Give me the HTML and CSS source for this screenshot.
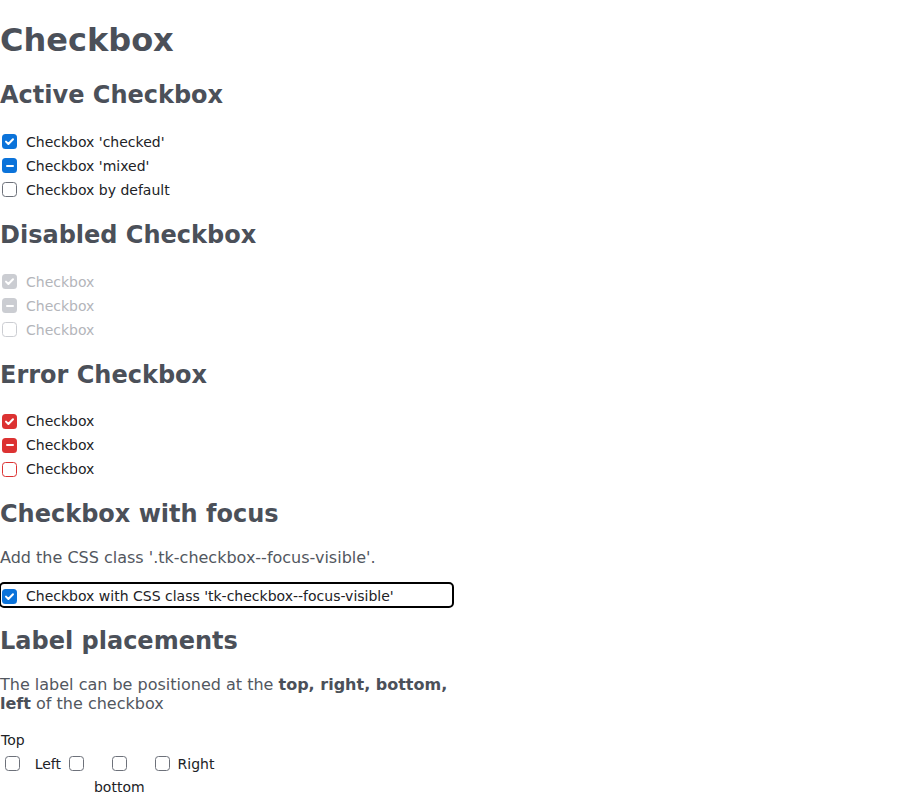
FILE: index.html
```html
<!DOCTYPE html>
<html lang="en">
<head>
<meta charset="utf-8">
<title>Checkbox</title>
<link rel="stylesheet" href="styles.css">
</head>
<body>
<main class="page">
  <h1 class="title">Checkbox</h1>

  <h2 class="section">Active Checkbox</h2>
  <div class="list">
    <label class="tk-checkbox">
      <span class="box box--checked"><svg viewBox="0 0 15 15"><path d="M4 7.6 L6.4 10 L11 5.2"/></svg></span>
      <span class="text">Checkbox 'checked'</span>
    </label>
    <label class="tk-checkbox">
      <span class="box box--mixed"><span class="bar"></span></span>
      <span class="text">Checkbox 'mixed'</span>
    </label>
    <label class="tk-checkbox">
      <span class="box"></span>
      <span class="text">Checkbox by default</span>
    </label>
  </div>

  <h2 class="section">Disabled Checkbox</h2>
  <div class="list list--disabled">
    <label class="tk-checkbox">
      <span class="box box--checked"><svg viewBox="0 0 15 15"><path d="M4 7.6 L6.4 10 L11 5.2"/></svg></span>
      <span class="text">Checkbox</span>
    </label>
    <label class="tk-checkbox">
      <span class="box box--mixed"><span class="bar"></span></span>
      <span class="text">Checkbox</span>
    </label>
    <label class="tk-checkbox">
      <span class="box"></span>
      <span class="text">Checkbox</span>
    </label>
  </div>

  <h2 class="section">Error Checkbox</h2>
  <div class="list list--error">
    <label class="tk-checkbox">
      <span class="box box--checked"><svg viewBox="0 0 15 15"><path d="M4 7.6 L6.4 10 L11 5.2"/></svg></span>
      <span class="text">Checkbox</span>
    </label>
    <label class="tk-checkbox">
      <span class="box box--mixed"><span class="bar"></span></span>
      <span class="text">Checkbox</span>
    </label>
    <label class="tk-checkbox">
      <span class="box"></span>
      <span class="text">Checkbox</span>
    </label>
  </div>

  <h2 class="section">Checkbox with focus</h2>
  <p class="desc">Add the CSS class '.tk-checkbox--focus-visible'.</p>
  <label class="tk-checkbox tk-checkbox--focus-visible">
    <span class="box box--checked"><svg viewBox="0 0 15 15"><path d="M4 7.6 L6.4 10 L11 5.2"/></svg></span>
    <span class="text">Checkbox with CSS class 'tk-checkbox--focus-visible'</span>
  </label>

  <h2 class="section">Label placements</h2>
  <p class="desc">The label can be positioned at the <strong>top, right, bottom, left</strong> of the checkbox</p>
  <div class="placements">
    <label class="place place--top">
      <span class="place-text place-text--top">Top</span>
      <span class="place-box"><span class="box"></span></span>
    </label>
    <label class="place place--left">
      <span class="place-text">Left</span>
      <span class="box"></span>
    </label>
    <label class="place place--bottom">
      <span class="place-box"><span class="box"></span></span>
      <span class="place-text">bottom</span>
    </label>
    <label class="place place--right">
      <span class="box"></span>
      <span class="place-text">Right</span>
    </label>
  </div>
</main>
</body>
</html>
```

FILE: styles.css
```css
html, body {
  margin: 0;
  padding: 0;
  background: #ffffff;
}

body {
  font-family: "DejaVu Sans", "Noto Sans", sans-serif;
  color: #212226;
}

.page {
  width: 50%;
}

.title {
  font-size: 32px;
  font-weight: bold;
  margin: 21.44px 0;
  color: #4b5059;
}

.section {
  font-size: 24px;
  font-weight: bold;
  margin: 19.92px 0;
  color: #4b5059;
}

.desc {
  font-size: 16px;
  margin: 16px 0;
  color: #525760;
}

.desc strong {
  color: #4b5059;
}

.tk-checkbox {
  box-sizing: border-box;
  display: flex;
  align-items: center;
  height: 24px;
  padding-top: 2px;
  gap: 9px;
  font-size: 14px;
  color: #212226;
}

.tk-checkbox .box {
  margin-left: 2px;
}

.box {
  box-sizing: border-box;
  flex: none;
  width: 15px;
  height: 15px;
  border: 1.5px solid #6d717a;
  border-radius: 3.5px;
  background: #ffffff;
  display: flex;
  align-items: center;
  justify-content: center;
}

.box svg {
  width: 15px;
  height: 15px;
  flex: none;
}

.box svg path {
  fill: none;
  stroke: #ffffff;
  stroke-width: 2;
  stroke-linecap: round;
  stroke-linejoin: round;
}

.box--checked,
.box--mixed {
  border: none;
  background: #0b73da;
}

.bar {
  display: block;
  width: 8px;
  height: 2px;
  border-radius: 1px;
  background: #ffffff;
}

.list--disabled .tk-checkbox {
  color: #b3b5ba;
}

.list--disabled .box {
  border-color: #cbcdd2;
}

.list--disabled .box--checked,
.list--disabled .box--mixed {
  background: #cbcdd2;
}

.list--error .box {
  border-color: #dc3232;
}

.list--error .box--checked,
.list--error .box--mixed {
  background: #dc3232;
}

.tk-checkbox--focus-visible {
  outline: 2px solid #000000;
  outline-offset: -1px;
  border-radius: 4px;
}

.placements {
  display: grid;
  grid-template-rows: 22px 24px 24px;
  grid-auto-flow: column;
  justify-content: start;
  column-gap: 10px;
  padding-left: 1px;
  font-size: 14px;
  color: #212226;
}

.place {
  display: flex;
  align-items: center;
}

.place--top,
.place--bottom {
  flex-direction: column;
}

.place--top {
  grid-row: 1 / 3;
}

.place--bottom {
  grid-row: 2 / 4;
}

.place--left,
.place--right {
  grid-row: 2;
  gap: 8px;
  padding-top: 1px;
}

.place-text {
  height: 24px;
  line-height: 24px;
}

.place-text--top {
  height: 22px;
  line-height: 22px;
}

.place-box {
  height: 24px;
  padding-top: 1px;
  box-sizing: border-box;
  display: flex;
  align-items: center;
}
```
